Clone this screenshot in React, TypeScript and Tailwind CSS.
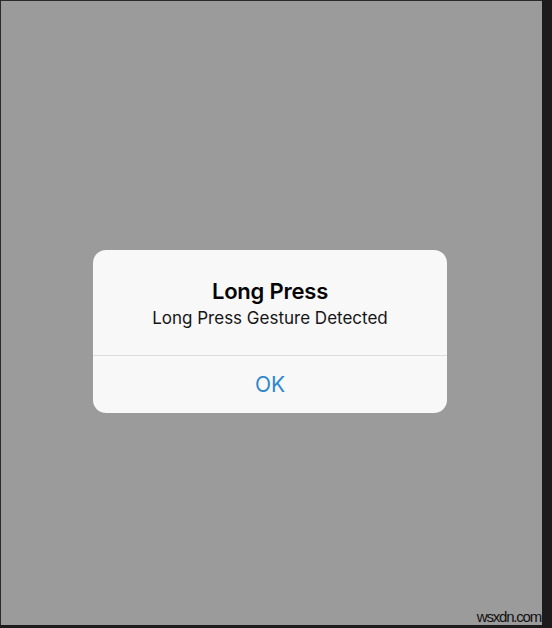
export default function App() {
  return (
    <div className="relative flex h-[628px] w-[552px] bg-[#1c1c1c]">
      {/* Screen */}
      <div className="flex h-[625px] w-[542px] flex-col items-center border-l border-t border-[#2a2a2a] bg-[#9b9b9b] pr-[3px] pt-[249px]">
        <div className="w-[354px] overflow-hidden rounded-[13px] bg-[#f8f8f8] font-['Inter',sans-serif]">
          <div className="flex flex-col items-center pb-[25px] pt-[27px]">
            <div className="text-[22px] font-semibold leading-[28px] tracking-[-0.2px] text-[#050505]">
              Long Press
            </div>
            <div className="mt-[2px] text-[17px] leading-[23px] text-[#151515]">
              Long Press Gesture Detected
            </div>
          </div>
          <div className="h-px bg-[#dcdcdc]" />
          <button className="flex h-[57px] w-full items-center justify-center text-[21px] text-[#2e87cb]">
            OK
          </button>
        </div>
      </div>

      {/* Watermark */}
      <div className="absolute bottom-[4px] right-[11px] font-['Liberation_Sans',sans-serif] text-[15px] leading-none tracking-[-1.2px] text-[#111]">
        wsxdn.com
      </div>
    </div>
  );
}
